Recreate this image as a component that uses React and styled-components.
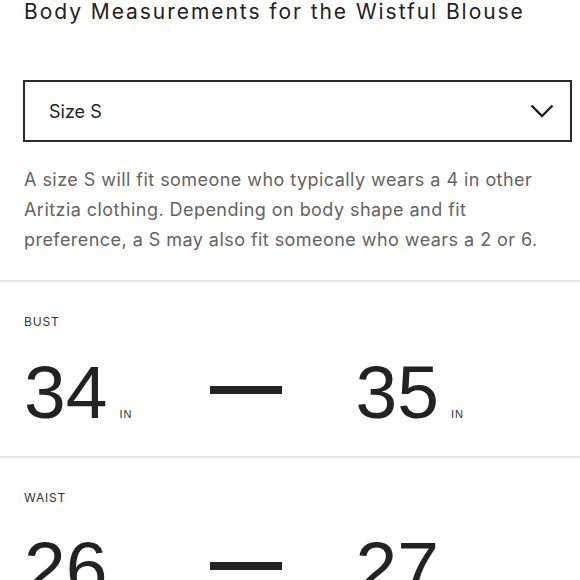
import styled, { createGlobalStyle } from "styled-components";

const measurements = [
    { id: "bust", label: "BUST", from: 34, to: 35 },
    { id: "waist", label: "WAIST", from: 26, to: 27 },
    { id: "hip", label: "HIP", from: 37, to: 38 },
];

const GlobalStyle = createGlobalStyle`
    * {
        box-sizing: border-box;
    }

    body {
        margin: 0;
        background: #fff;
        font-family: Inter, "Noto Sans", sans-serif;
        color: #222;
    }
`;

export default function App() {
    return (
        <>
            <GlobalStyle />
            <Page>
                <Intro>
                    <Title>Body Measurements for the Wistful Blouse</Title>

                    <SizeSelect>
                        <span>Size S</span>
                        <svg width="24" height="14" viewBox="0 0 24 14">
                            <polyline
                                points="1.5,1.5 12,12 22.5,1.5"
                                fill="none"
                                stroke="#1e1e1e"
                                strokeWidth="2.4"
                            />
                        </svg>
                    </SizeSelect>

                    <FitNote>
                        A size S will fit someone who typically wears a 4 in other
                        Aritzia clothing. Depending on body shape and fit
                        preference, a S may also fit someone who wears a 2 or 6.
                    </FitNote>
                </Intro>

                {measurements.map((m) => (
                    <Measurement key={m.id}>
                        <Label>{m.label}</Label>
                        <ValueRow>
                            <Value>
                                {m.from}
                                <Unit>IN</Unit>
                            </Value>
                            <Dash />
                            <Value>
                                {m.to}
                                <Unit>IN</Unit>
                            </Value>
                        </ValueRow>
                    </Measurement>
                ))}
            </Page>
        </>
    );
}

/* ================== STYLES ================== */

const Page = styled.main`
    width: 580px;
    height: 580px;
    overflow: hidden;
`;

const Intro = styled.section`
    padding: 0 8px 25px 23px;
    border-bottom: 2px solid #e8e8e8;
`;

const Title = styled.h1`
    margin: 0 0 0 1px;
    font-size: 21px;
    line-height: 24px;
    font-weight: 400;
    letter-spacing: 1.95px;
    color: #222;
`;

const SizeSelect = styled.div`
    margin-top: 56px;
    height: 62px;
    border: 2px solid #2b2b2b;
    padding: 0 16px 0 24px;
    display: flex;
    align-items: center;
    justify-content: space-between;
    font-size: 18px;
    color: #222;

    svg {
        display: block;
    }
`;

const FitNote = styled.p`
    margin: 23px 0 0 1px;
    font-size: 18px;
    line-height: 30px;
    letter-spacing: 0.45px;
    color: #636363;
`;

const Measurement = styled.section`
    padding: 32px 24px 26.5px;
    border-bottom: 2px solid #e8e8e8;
`;

const Label = styled.h2`
    margin: 0;
    font-size: 12px;
    line-height: 16px;
    font-weight: 400;
    letter-spacing: 0.8px;
    color: #333;
`;

const ValueRow = styled.div`
    margin-top: 24.5px;
    display: flex;
    align-items: baseline;
`;

const Value = styled.div`
    display: flex;
    align-items: baseline;
    gap: 12px;
    font-family: "Liberation Sans", Arial, sans-serif;
    font-size: 75px;
    line-height: 75px;
    color: #222;
`;

const Unit = styled.span`
    font-size: 11px;
    line-height: 11px;
    letter-spacing: 1px;
    color: #333;
`;

const Dash = styled.div`
    align-self: flex-start;
    width: 72px;
    height: 8px;
    margin: 31px 73px 0 78px;
    background: #222;
`;
